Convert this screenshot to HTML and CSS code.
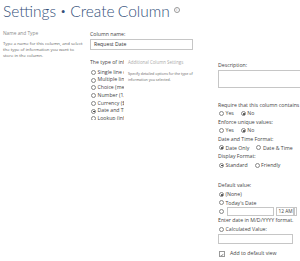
FILE: index.html
```html
<!DOCTYPE html>
<html>
<head>
<meta charset="utf-8">
<link rel="stylesheet" href="styles.css">
</head>
<body>
<div class="page">
  <h1 class="title">Settings <span class="sep">•</span> Create Column<span class="info">i</span></h1>
  <div class="main">
    <section class="left-col">
      <h2 class="sec-title">Name and Type</h2>
      <p class="sec-desc">Type a name for this column, and select the type of information you want to store in the column.</p>
    </section>
    <section class="mid-col">
      <div class="lbl">Column name:</div>
      <div class="field name-field">Request Date</div>
      <div class="type-row">
        <div class="type-box">
          <div class="lbl nowrap">The type of information in this column is:</div>
          <ul class="radio-list">
            <li><span class="radio"></span>Single line of text</li>
            <li><span class="radio"></span>Multiple lines of text</li>
            <li><span class="radio"></span>Choice (menu to choose from)</li>
            <li><span class="radio"></span>Number (1, 1.0, 100)</li>
            <li><span class="radio"></span>Currency ($, ¥, €)</li>
            <li><span class="radio on"></span>Date and Time</li>
            <li><span class="radio"></span>Lookup (information already on this site)</li>
          </ul>
        </div>
        <div class="add-box">
          <h2 class="sec-title faint">Additional Column Settings</h2>
          <p class="sec-desc small">Specify detailed options for the type of information you selected.</p>
        </div>
      </div>
    </section>
    <section class="right-col">
      <div class="lbl">Description:</div>
      <div class="field textarea"></div>
      <div class="lbl gap-top">Require that this column contains information:</div>
      <div class="opts"><span class="opt"><span class="radio"></span>Yes</span><span class="opt"><span class="radio on"></span>No</span></div>
      <div class="lbl">Enforce unique values:</div>
      <div class="opts"><span class="opt"><span class="radio"></span>Yes</span><span class="opt"><span class="radio on"></span>No</span></div>
      <div class="lbl">Date and Time Format:</div>
      <div class="opts"><span class="opt"><span class="radio on"></span>Date Only</span><span class="opt"><span class="radio"></span>Date &amp; Time</span></div>
      <div class="lbl">Display Format:</div>
      <div class="opts"><span class="opt"><span class="radio on"></span>Standard</span><span class="opt"><span class="radio"></span>Friendly</span></div>
      <div class="lbl gap-top2">Default value:</div>
      <div class="opts"><span class="opt"><span class="radio on"></span>(None)</span></div>
      <div class="opts"><span class="opt"><span class="radio"></span>Today's Date</span></div>
      <div class="opts date-row"><span class="radio"></span><span class="field date-field"></span><span class="field time-field">12 AM</span><span class="spin"></span></div>
      <div class="lbl">Enter date in M/D/YYYY format.</div>
      <div class="opts"><span class="opt"><span class="radio"></span>Calculated Value:</span></div>
      <div class="field calc-field"></div>
      <div class="opts check-row"><span class="check"><svg viewBox="0 0 6 6" width="6" height="6"><path d="M1.2 3.1 L2.5 4.4 L4.9 1.4" fill="none" stroke="#444" stroke-width="0.9"/></svg></span>Add to default view</div>
    </section>
  </div>
</div>
</body>
</html>
```

FILE: styles.css
```css
html, body {
  margin: 0;
  padding: 0;
  background: #fff;
}
body {
  font-family: "Open Sans", "DejaVu Sans", sans-serif;
  color: #444;
  width: 300px;
  height: 261px;
  overflow: hidden;
}
.page {
  padding: 0 0 0 3px;
}
.title {
  margin: 0;
  font-family: Lato, "Open Sans", sans-serif;
  font-weight: 300;
  font-size: 15.5px;
  line-height: 22px;
  word-spacing: -1px;
  color: #34507a;
  white-space: nowrap;
}
.title .sep {
  font-size: 10px;
  position: relative;
  top: -2px;
  padding: 0 1px;
}
.info {
  display: inline-block;
  width: 4px;
  height: 4px;
  border: 0.6px solid #999;
  border-radius: 50%;
  font-family: "Open Sans", sans-serif;
  font-size: 3.5px;
  line-height: 4px;
  text-align: center;
  color: #999;
  font-weight: 600;
  vertical-align: 6px;
  margin-left: 4px;
}
.main {
  display: flex;
  align-items: flex-start;
  margin-top: 6px;
}
.left-col {
  width: 82px;
  flex: none;
}
.sec-title {
  margin: 0;
  font-weight: 400;
  font-size: 4.8px;
  line-height: 7px;
  color: #8a8a8a;
}
.sec-desc {
  margin: 3px 0 0;
  font-size: 4.3px;
  line-height: 6px;
  color: #666;
}
.mid-col {
  width: 120px;
  flex: none;
  margin-left: 5px;
  padding-top: 0;
}
.lbl {
  font-size: 5.2px;
  line-height: 8.6px;
  color: #444;
  white-space: nowrap;
}
.field {
  box-sizing: border-box;
  border: 0.8px solid #c6c6c6;
  background: #fff;
}
.name-field {
  width: 103px;
  height: 11px;
  font-size: 5.2px;
  line-height: 9.5px;
  padding-left: 3px;
  color: #333;
}
.type-row {
  display: flex;
  margin-top: 8px;
}
.type-box {
  width: 34px;
  height: 62px;
  overflow: hidden;
  flex: none;
}
.radio-list {
  list-style: none;
  margin: 2.5px 0 0;
  padding: 0;
}
.radio-list li {
  font-size: 5.2px;
  line-height: 7.7px;
  white-space: nowrap;
  display: flex;
  align-items: center;
}
.radio {
  display: inline-block;
  box-sizing: border-box;
  width: 5px;
  height: 5px;
  border: 0.6px solid #888;
  border-radius: 50%;
  margin: 0 1.5px 0 1px;
  flex: none;
  position: relative;
}
.radio.on::after {
  content: "";
  position: absolute;
  left: 1px;
  top: 1px;
  width: 1.8px;
  height: 1.8px;
  border-radius: 50%;
  background: #333;
}
.add-box {
  margin-left: 4px;
  width: 66px;
  flex: none;
}
.sec-title.faint {
  color: #aaa;
  font-size: 4.4px;
  line-height: 8.6px;
}
.sec-desc.small {
  font-size: 3.6px;
  line-height: 6px;
  margin-top: 5px;
}
.right-col {
  flex: 1;
  min-width: 0;
  margin-left: 8px;
  padding-top: 31px;
}
.textarea {
  width: 110px;
  height: 18px;
}
.gap-top {
  margin-top: 13px;
}
.gap-top2 {
  margin-top: 12px;
}
.opts {
  display: flex;
  align-items: center;
  font-size: 5.2px;
  line-height: 8.6px;
  white-space: nowrap;
}
.opt {
  display: inline-flex;
  align-items: center;
  margin-right: 6px;
}
.date-row .date-field {
  width: 47px;
  height: 9px;
  margin-left: 1px;
}
.date-row .time-field {
  width: 18px;
  height: 9px;
  margin-left: 2px;
  font-size: 4.8px;
  line-height: 7.5px;
  padding-left: 2px;
}
.spin {
  width: 3px;
  height: 9px;
  border: 0.6px solid #c6c6c6;
  box-sizing: border-box;
}
.calc-field {
  width: 75px;
  height: 10px;
  margin-top: 1px;
}
.check-row {
  margin-top: 5px;
}
.check {
  display: inline-flex;
  width: 6px;
  height: 6px;
  box-sizing: border-box;
  border: 0.6px solid #999;
  margin: 0 5px 0 1px;
}
.check svg {
  display: block;
}
```
